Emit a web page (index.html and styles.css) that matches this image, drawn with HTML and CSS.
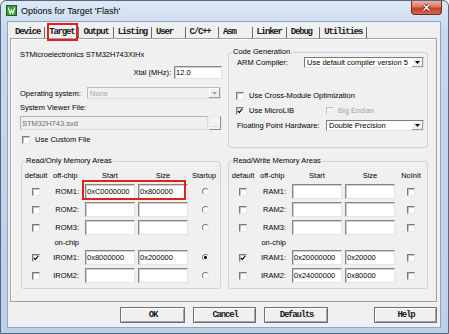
FILE: index.html
```html
<!DOCTYPE html>
<html lang="en">

<head>
    <meta charset="UTF-8">
    <meta name="viewport" content="width=device-width, initial-scale=1.0">
    <title>Options for Target 'Flash'</title>
    <link rel="stylesheet" href="styles.css">
</head>

<body>

    <div class="window">
        <div class="titlebar">
            <svg class="app-icon" viewBox="0 0 11 11">
                <rect x="0.5" y="0.5" width="10" height="10" fill="#3d9a3b" stroke="#1e5e22" />
                <path d="M2.3 2.5l1.9 6 1.3-3.4 1.3 3.4 1.9-6" fill="none" stroke="#fff" stroke-width="1.1" />
            </svg>
            <span class="title">Options for Target 'Flash'</span>
            <div class="close">
                <svg width="11" height="9" viewBox="0 0 11 9">
                    <path d="M2.5 1.5l6 6M8.5 1.5l-6 6" stroke="#5a1a10" stroke-width="3" />
                    <path d="M2.5 1.5l6 6M8.5 1.5l-6 6" stroke="#fff" stroke-width="1.6" />
                </svg>
            </div>
        </div>

        <div class="client">
            <div class="tabs">
                <span class="tab">Device</span>
                <span class="tab active">Target<i class="mark"></i></span>
                <span class="tab">Output</span>
                <span class="tab">Listing</span>
                <span class="tab">User</span>
                <span class="tab">C/C++</span>
                <span class="tab">Asm</span>
                <span class="tab">Linker</span>
                <span class="tab">Debug</span>
                <span class="tab">Utilities</span>
            </div>

            <div class="page">
                <div class="device">
                    <div class="chip">STMicroelectronics STM32H743XIHx</div>
                    <div class="xtal">
                        <label>Xtal (MHz):</label>
                        <input class="edit xtal-edit" type="text" value="12.0">
                    </div>
                    <div class="os">
                        <span>Operating system:</span>
                        <div class="combo disabled os-combo">
                            <span class="text">None</span>
                            <span class="drop"><svg width="5" height="3" viewBox="0 0 5 3"><path d="M0 0h5L2.5 3z" /></svg></span>
                        </div>
                    </div>
                    <div class="svf-label">System Viewer File:</div>
                    <div class="svf">
                        <input class="edit disabled svf-edit" type="text" value="STM32H743.svd" disabled>
                        <button class="dots">...</button>
                    </div>
                    <div class="check custom"><span class="cb"></span>Use Custom File</div>
                </div>

                <fieldset class="group codegen">
                    <legend>Code Generation</legend>
                    <div class="cg-row arm">
                        <span>ARM Compiler:</span>
                        <div class="combo arm-combo">
                            <span class="text">Use default compiler version 5</span>
                            <span class="drop"><svg width="5" height="3" viewBox="0 0 5 3"><path d="M0 0h5L2.5 3z" /></svg></span>
                        </div>
                    </div>
                    <div class="check cross"><span class="cb"></span>Use Cross-Module Optimization</div>
                    <div class="checks">
                        <div class="check microlib"><span class="cb on"><svg viewBox="0 0 6 6"><path d="M0.8 2.8l1.6 1.7 2.9-3.6" /></svg></span>Use MicroLIB</div>
                        <div class="check off"><span class="cb"></span>Big Endian</div>
                    </div>
                    <div class="cg-row fph">
                        <span>Floating Point Hardware:</span>
                        <div class="combo fph-combo">
                            <span class="text">Double Precision</span>
                            <span class="drop"><svg width="5" height="3" viewBox="0 0 5 3"><path d="M0 0h5L2.5 3z" /></svg></span>
                        </div>
                    </div>
                </fieldset>

                <fieldset class="group">
                    <legend>Read/Only Memory Areas</legend>
                    <div class="mem">
                        <span class="hd">default</span>
                        <span class="hd left">off-chip</span>
                        <span class="hd">Start</span>
                        <span class="hd">Size</span>
                        <span class="hd last">Startup</span>

                        <span class="cb"></span>
                        <span class="lbl">ROM1:</span>
                        <div class="hl"><input class="edit" type="text" value="0xC0000000"></div>
                        <input class="edit" type="text" value="0x800000">
                        <span class="radio"></span>

                        <span class="cb"></span>
                        <span class="lbl">ROM2:</span>
                        <input class="edit" type="text" value="">
                        <input class="edit" type="text" value="">
                        <span class="radio"></span>

                        <span class="cb"></span>
                        <span class="lbl">ROM3:</span>
                        <input class="edit" type="text" value="">
                        <input class="edit" type="text" value="">
                        <span class="radio"></span>

                        <span class="onchip">on-chip</span>

                        <span class="cb on"><svg viewBox="0 0 6 6"><path d="M0.8 2.8l1.6 1.7 2.9-3.6" /></svg></span>
                        <span class="lbl">IROM1:</span>
                        <input class="edit" type="text" value="0x8000000">
                        <input class="edit" type="text" value="0x200000">
                        <span class="radio on"></span>

                        <span class="cb"></span>
                        <span class="lbl">IROM2:</span>
                        <input class="edit" type="text" value="">
                        <input class="edit" type="text" value="">
                        <span class="radio"></span>
                    </div>
                </fieldset>

                <fieldset class="group">
                    <legend>Read/Write Memory Areas</legend>
                    <div class="mem">
                        <span class="hd">default</span>
                        <span class="hd left">off-chip</span>
                        <span class="hd">Start</span>
                        <span class="hd">Size</span>
                        <span class="hd last">NoInit</span>

                        <span class="cb"></span>
                        <span class="lbl">RAM1:</span>
                        <input class="edit" type="text" value="">
                        <input class="edit" type="text" value="">
                        <span class="cb last"></span>

                        <span class="cb"></span>
                        <span class="lbl">RAM2:</span>
                        <input class="edit" type="text" value="">
                        <input class="edit" type="text" value="">
                        <span class="cb last"></span>

                        <span class="cb"></span>
                        <span class="lbl">RAM3:</span>
                        <input class="edit" type="text" value="">
                        <input class="edit" type="text" value="">
                        <span class="cb last"></span>

                        <span class="onchip">on-chip</span>

                        <span class="cb on"><svg viewBox="0 0 6 6"><path d="M0.8 2.8l1.6 1.7 2.9-3.6" /></svg></span>
                        <span class="lbl">IRAM1:</span>
                        <input class="edit" type="text" value="0x20000000">
                        <input class="edit" type="text" value="0x20000">
                        <span class="cb last"></span>

                        <span class="cb"></span>
                        <span class="lbl">IRAM2:</span>
                        <input class="edit" type="text" value="0x24000000">
                        <input class="edit" type="text" value="0x80000">
                        <span class="cb last"></span>
                    </div>
                </fieldset>
            </div>

            <div class="buttons">
                <button class="btn ok">OK</button>
                <button class="btn cancel">Cancel</button>
                <button class="btn defaults">Defaults</button>
                <button class="btn help">Help</button>
            </div>
        </div>
    </div>

</body>

</html>
```

FILE: styles.css
```css
body{
    margin: 0;
    font-family: "Liberation Sans", Arial, sans-serif;
    font-size: 7.5px;
    color: #000000;
    background-color: #ffffff;
}

.window{
    width: 449px;
    height: 334px;
    box-sizing: border-box;
    border: 1px solid #55687f;
    border-radius: 6px 6px 0 0;
    background: linear-gradient(to bottom, #dce8f5 0%, #c6d8ed 10%, #bcd0e8 100%);
    padding: 0 7px 5px 6px;
    display: flex;
    flex-direction: column;
}

/* title bar */

.titlebar{
    height: 20px;
    display: flex;
    align-items: flex-start;
}

.app-icon{
    width: 11px;
    height: 11px;
    margin: 4px 0 0 -1px;
}

.title{
    margin: 4px 0 0 4px;
    font-size: 9px;
    line-height: 12px;
}

.close{
    margin-left: auto;
    margin-right: -1px;
    width: 31px;
    height: 14px;
    box-sizing: border-box;
    border: 1px solid #6e2a1e;
    border-top: none;
    border-radius: 0 0 4px 4px;
    background: linear-gradient(to bottom, #e9b2a6 0%, #d97763 45%, #c2412a 55%, #d6644e 100%);
    display: flex;
    align-items: center;
    justify-content: center;
}

/* client area */

.client{
    flex: 1;
    border: 1px solid #8fa6c2;
    background-color: #f0f0f0;
    padding: 2px 3px 0 2px;
    display: flex;
    flex-direction: column;
}

.tabs{
    height: 14px;
    display: flex;
    align-items: flex-end;
    padding-left: 1px;
    font-family: "Liberation Mono", monospace;
    font-weight: 700;
    font-size: 9px;
    letter-spacing: -1.2px;
}

.tab{
    position: relative;
    min-width: 33.5px;
    box-sizing: border-box;
    height: 11px;
    line-height: 11px;
    padding: 0 4px;
    border-right: 1px solid #6a6a6a;
    color: #1a1a1a;
}

.mark{
    position: absolute;
    left: 1.5px;
    top: -4px;
    width: 31px;
    height: 18px;
    box-sizing: border-box;
    border: 2px solid #e4201f;
}

.page{
    height: 264px;
    box-sizing: border-box;
    border: 1px solid #a0a0a0;
    box-shadow: inset 1px 1px #ffffff;
    padding: 8px 0 0 10px;
    display: grid;
    grid-template-columns: 200px 200px;
    grid-template-rows: 101px 133px;
    gap: 8px 7px;
}

/* device column */

.device{
    margin: 0 -1px 0 -1px;
}

.chip{
    padding-top: 3px;
    line-height: 9px;
}

.xtal{
    margin-top: 7px;
    height: 13px;
    display: flex;
    justify-content: flex-end;
    align-items: center;
    gap: 3px;
}

.xtal-edit{
    width: 48px;
    height: 13px;
    padding-left: 2px;
}

.os{
    margin-top: 8px;
    height: 12px;
    padding-right: 1px;
    display: flex;
    justify-content: space-between;
    align-items: center;
}

.os-combo{
    width: 134px;
    height: 12px;
}

.svf-label{
    margin-top: 4px;
    line-height: 9px;
}

.svf{
    margin-top: 4px;
    height: 14px;
    display: flex;
    gap: 1px;
}

.svf-edit{
    width: 188px;
    height: 14px;
}

.dots{
    width: 12px;
    height: 14px;
    margin: 0;
    padding: 0 0 1px 0;
    box-sizing: border-box;
    border: 1px solid #a6a6a6;
    border-color: #e8e8e8 #8c8c8c #8c8c8c #e8e8e8;
    background-color: #f4f4f4;
    font-family: "Liberation Sans", Arial, sans-serif;
    font-size: 6px;
    color: #606060;
    display: flex;
    align-items: flex-end;
    justify-content: center;
}

.custom{
    margin-top: 5px;
    padding-left: 2px;
}

/* edits, combos, checks */

.edit{
    box-sizing: border-box;
    margin: 0;
    padding: 0 1px;
    border: 1px solid;
    border-color: #858585 #e4e4e4 #e4e4e4 #858585;
    box-shadow: inset 1px 1px #cfcfcf;
    background-color: #ffffff;
    font-family: "Liberation Sans", Arial, sans-serif;
    font-size: 7.5px;
    color: #000000;
    outline: none;
}

.edit.disabled{
    background-color: #f0f0f0;
    border-color: #b4b4b4 #dadada #dadada #b4b4b4;
    box-shadow: none;
    color: #6d6d6d;
}

.combo{
    box-sizing: border-box;
    display: flex;
    border: 1px solid;
    border-color: #7c7c7c #e2e2e2 #e2e2e2 #7c7c7c;
    background-color: #ffffff;
}

.combo .text{
    flex: 1;
    padding: 0 2px;
    display: flex;
    align-items: center;
    white-space: nowrap;
    overflow: hidden;
}

.drop{
    width: 11px;
    box-sizing: border-box;
    background-color: #f0f0f0;
    box-shadow: inset -1px -1px #9a9a9a, inset 1px 1px #ffffff;
    display: flex;
    align-items: center;
    justify-content: center;
    color: #000000;
}

.drop svg{
    fill: currentColor;
}

.combo.disabled{
    background-color: #f0f0f0;
    border-color: #bcbcbc #dedede #dedede #bcbcbc;
    color: #a3a3a3;
}

.combo.disabled .drop{
    color: #a3a3a3;
}

.check{
    height: 9px;
    display: flex;
    align-items: center;
    gap: 5px;
    white-space: nowrap;
}

.cb{
    width: 8px;
    height: 8px;
    box-sizing: border-box;
    border: 1px solid;
    border-color: #7b7b7b #e6e6e6 #e6e6e6 #7b7b7b;
    box-shadow: inset 1px 1px #c4c4c4;
    background-color: #ffffff;
    display: flex;
}

.cb svg{
    width: 6px;
    height: 6px;
    fill: none;
    stroke: #111111;
    stroke-width: 1.2;
}

.check.off{
    color: #a3a3a3;
    gap: 4px;
}

.check.off .cb{
    background-color: #f4f4f4;
    border-color: #c0c0c0 #ececec #ececec #c0c0c0;
    box-shadow: none;
}

.radio{
    width: 7px;
    height: 7px;
    box-sizing: border-box;
    border-radius: 50%;
    border: 1px solid;
    border-color: #7b7b7b #e6e6e6 #e6e6e6 #7b7b7b;
    background-color: #ffffff;
}

.radio.on{
    background: radial-gradient(circle, #000000 1.2px, #ffffff 1.8px);
}

/* group boxes */

.group{
    margin: 0;
    padding: 0;
    min-width: 0;
    border: 1px solid #cad4dc;
    border-radius: 3px;
}

.group legend{
    margin-left: 3px;
    padding: 0 1px;
    line-height: 10px;
}

.cg-row{
    height: 11px;
    padding: 0 3px 0 8px;
    display: flex;
    justify-content: space-between;
    align-items: center;
}

.arm-combo{
    width: 120px;
    height: 11px;
}

.cross{
    margin-top: 23px;
    padding-left: 7px;
}

.checks{
    margin-top: 6px;
    padding-left: 7px;
    display: flex;
}

.microlib{
    width: 90px;
}

.fph{
    margin-top: 5px;
}

.fph-combo{
    width: 98px;
    height: 11px;
}

.mem{
    margin-top: 3px;
    display: grid;
    grid-template-columns: 28px 29px 50px 50px 1fr;
    grid-template-rows: 12px 15px 15px 15px 9px 15px 15px;
    gap: 3px;
    align-items: center;
    justify-items: center;
}

.mem .edit{
    width: 50px;
    height: 15px;
}

.mem .hd{
    white-space: nowrap;
}

.mem .left{
    justify-self: start;
}

.mem .last{
    margin-right: 3px;
}

.mem .lbl{
    justify-self: end;
    padding-right: 3px;
}

.onchip{
    grid-column: 1 / 3;
    justify-self: end;
    padding-right: 3px;
}

.onchip + .cb{
    grid-column: 1;
}

.hl{
    position: relative;
    width: 50px;
    height: 15px;
}

.hl::after{
    content: "";
    position: absolute;
    left: -3px;
    top: -4px;
    width: 104px;
    height: 20px;
    box-sizing: border-box;
    border: 2px solid #e4201f;
}

/* bottom buttons */

.buttons{
    margin-top: 5px;
    padding-left: 110px;
    display: flex;
    gap: 8px;
}

.btn{
    height: 16px;
    margin: 0;
    padding: 0 0 0 1px;
    box-sizing: border-box;
    border: 1px solid #6f6f6f;
    box-shadow: inset 1px 1px #ffffff, inset -1px -1px #a3a3a3;
    background-color: #f0f0f0;
    font-family: "Liberation Mono", monospace;
    font-weight: 700;
    font-size: 9px;
    letter-spacing: -1.2px;
    color: #1a1a1a;
}

.ok{
    width: 65px;
}

.cancel{
    width: 63px;
}

.defaults{
    width: 64px;
}

.help{
    width: 63px;
    margin-left: auto;
}
```
